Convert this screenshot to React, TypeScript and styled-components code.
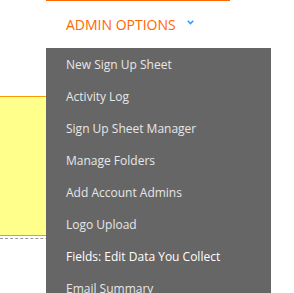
import React from "react";
import styled, { createGlobalStyle } from "styled-components";

const Global = createGlobalStyle`
  html, body { margin: 0; padding: 0; background: #fff; }
  body { font-family: "Open Sans", "Liberation Sans", sans-serif; }
`;

const Page = styled.div`
  position: relative;
  width: 294px;
  height: 293px;
  overflow: hidden;
`;

const Header = styled.div`
  margin-left: 46px;
  width: 184px;
  border-top: 1px solid #ff6600;
  height: 47px;
  display: flex;
  align-items: center;
  padding-left: 20px;
  box-sizing: border-box;
  gap: 10px;
`;

const NavLabel = styled.span`
  color: #ff6600;
  font-size: 14px;
  text-transform: uppercase;
  line-height: 1;
  margin-top: 1px;
`;

const Chevron = styled.svg`
  width: 7px;
  height: 5px;
  margin-top: -4px;
  margin-left: 1px;
`;

const Content = styled.div`
  margin-top: 49px;
  width: 200px;
`;

const Notice = styled.div`
  background: #ffff8c;
  border-top: 1px solid #ff9900;
  border-bottom: 1px solid #ff9900;
  height: 138px;
`;

const DashLine = styled.div`
  margin-top: 2px;
  border-top: 1px dashed #999;
`;

const Menu = styled.ul`
  position: absolute;
  top: 48px;
  left: 46px;
  width: 225px;
  margin: 0;
  padding: 0;
  list-style: none;
  background: #666666;
`;

const Item = styled.li<{ $active?: boolean }>`
  height: 32px;
  display: flex;
  align-items: center;
  padding-left: 20px;
  font-size: 12px;
  color: ${(p) => (p.$active ? "#ffffff" : "#e6e6e6")};
  font-weight: 400;
  white-space: nowrap;
`;

const items = [
  "New Sign Up Sheet",
  "Activity Log",
  "Sign Up Sheet Manager",
  "Manage Folders",
  "Add Account Admins",
  "Logo Upload",
  "Fields: Edit Data You Collect",
  "Email Summary",
];

export default function App() {
  return (
    <Page>
      <Global />
      <Header>
        <NavLabel>Admin Options</NavLabel>
        <Chevron viewBox="0 0 7 5">
          <path d="M0.8 0.8 L3.5 3.6 L6.2 0.8" fill="none" stroke="#3399ff" strokeWidth="1.6" />
        </Chevron>
      </Header>
      <Content>
        <Notice />
        <DashLine />
      </Content>
      <Menu>
        {items.map((t, i) => (
          <Item key={t} $active={i === 6}>
            {t}
          </Item>
        ))}
      </Menu>
    </Page>
  );
}
